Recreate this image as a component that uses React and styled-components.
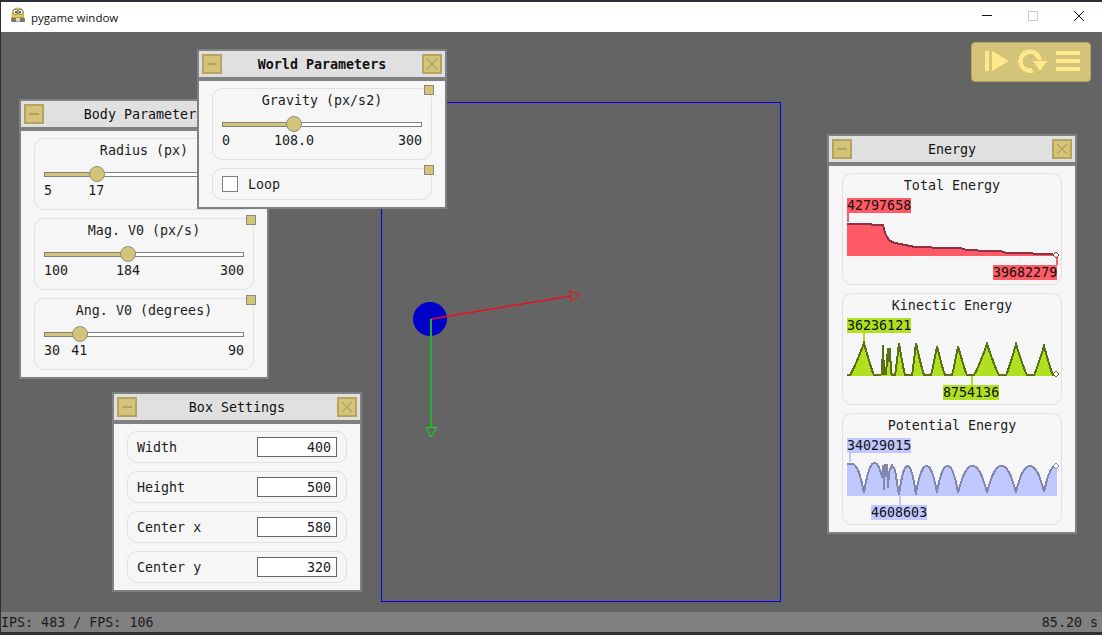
import React from 'react';
import styled, { createGlobalStyle } from 'styled-components';

const GlobalStyle = createGlobalStyle`
    html, body {
        margin: 0;
        padding: 0;
        overflow: hidden;
        background: #2b2f36;
    }
    * {
        box-sizing: border-box;
    }
`;

const MONO = `'DejaVu Sans Mono', 'Liberation Mono', monospace`;
const GOLD = '#d4c479';
const GOLD_DARK = '#b5a35f';

const Frame = styled.div`
    width: 1102px;
    height: 635px;
    padding: 2px 0 3px 1px;
    display: flex;
    flex-direction: column;
    background: #2b2f36;
`;

const TitleBar = styled.div`
    height: 30px;
    flex: none;
    display: flex;
    align-items: center;
    padding-left: 9px;
    background: #fff;
    font-family: 'Open Sans', 'Noto Sans', sans-serif;
    font-size: 11.5px;
    color: #111;
`;

const TitleText = styled.span`
    margin-left: 5px;
    flex: 1;
`;

const Caption = styled.div`
    display: flex;
    align-items: center;
    width: 46px;
    height: 30px;
    margin-top: -2px;
    justify-content: center;
    color: #111;
`;

const Canvas = styled.div`
    position: relative;
    flex: 1;
    background: #646464;
    overflow: hidden;
`;

const Scene = styled.svg`
    position: absolute;
    left: 0;
    top: 0;
`;

const StatusBar = styled.div`
    height: 20px;
    flex: none;
    display: flex;
    justify-content: space-between;
    align-items: center;
    padding: 0 4px 0 0;
    background: #808080;
    font-family: ${MONO};
    font-size: 13.33px;
    color: #1c1c1c;
`;

const Toolbar = styled.div`
    position: absolute;
    left: 970px;
    top: 10px;
    width: 120px;
    height: 40px;
    display: flex;
    gap: 9px;
    padding: 8px 0 0 13px;
    background: ${GOLD};
    border: 1px solid ${GOLD_DARK};
    border-radius: 4px;
    svg {
        display: block;
        fill: #ffe88a;
    }
`;

const Win = styled.div`
    position: absolute;
    left: ${(p) => p.$x - 1}px;
    top: ${(p) => p.$y - 32}px;
    width: 250px;
    border: 2px solid #808080;
    background: #f6f6f6;
`;

const WinHead = styled.div`
    height: 30px;
    display: flex;
    align-items: flex-start;
    padding: 3px 3px 0;
    background: #e0e0e0;
    border-bottom: 4px solid #808080;
`;

const WinTitle = styled.div`
    flex: 1;
    text-align: center;
    font-family: ${MONO};
    font-size: 13.33px;
    font-weight: ${(p) => (p.$active ? 700 : 400)};
    line-height: 22px;
    color: #111;
`;

const HeadButton = styled.div`
    width: 20px;
    height: 20px;
    flex: none;
    display: flex;
    align-items: center;
    justify-content: center;
    background: ${GOLD};
    border: 2px solid ${GOLD_DARK};
    svg {
        display: block;
    }
`;

const WinBody = styled.div`
    display: flex;
    flex-direction: column;
    gap: 8px;
    padding: 7px 13px;
`;

const Group = styled.div`
    position: relative;
    background: #f6f6f6;
    border: 1px solid #e0e0e0;
    border-radius: 10px;
    font-family: ${MONO};
    font-size: 13.33px;
    color: #1c1c1c;
`;

const Corner = styled.div`
    position: absolute;
    top: -4px;
    right: -3px;
    width: 10px;
    height: 10px;
    background: ${GOLD};
    border: 1px solid #8a8a7a;
`;

const SliderGroup = styled(Group)`
    height: 72px;
    padding: 4px 9px 0;
`;

const GroupTitle = styled.div`
    height: 16px;
    line-height: 16px;
    text-align: center;
`;

const Track = styled.div`
    position: relative;
    height: 5px;
    margin-top: 13px;
    background: #fff;
    border: 1px solid #808080;
`;

const TrackFill = styled.div`
    height: 100%;
    background: ${GOLD};
`;

const Handle = styled.div`
    position: absolute;
    top: -7px;
    width: 16px;
    height: 16px;
    margin-left: -8px;
    background: ${GOLD};
    border: 1px solid #8f8f80;
    border-radius: 50%;
`;

const ValueRow = styled.div`
    position: relative;
    display: flex;
    justify-content: space-between;
    height: 16px;
    margin-top: 6px;
    line-height: 16px;
`;

const CurrentValue = styled.span`
    position: absolute;
    top: 0;
    transform: translateX(-50%);
`;

const FieldRow = styled(Group)`
    height: 32px;
    display: flex;
    align-items: center;
    justify-content: space-between;
    padding: 0 9px;
`;

const NumberInput = styled.input`
    width: 80px;
    height: 20px;
    padding: 0 5px 0 0;
    border: 1px solid #666;
    border-radius: 0;
    outline: none;
    background: #fff;
    text-align: right;
    font-family: ${MONO};
    font-size: 13.33px;
    color: #1c1c1c;
`;

const CheckRow = styled(Group)`
    height: 32px;
    display: flex;
    align-items: center;
    gap: 10px;
    padding: 0 9px;
`;

const CheckBox = styled.div`
    width: 16px;
    height: 16px;
    background: #fff;
    border: 1px solid #808080;
`;

const ChartGroup = styled(Group)`
    height: 112px;
    padding: 4px 4px 0;
`;

const Tag = styled.div`
    width: max-content;
    height: 15px;
    margin-left: ${(p) => p.$left}px;
    margin-top: ${(p) => p.$gap || 0}px;
    padding: 0;
    line-height: 15px;
    background: ${(p) => p.$color};
    color: #111;
`;

const Plot = styled.svg`
    display: block;
    overflow: visible;
`;

const range = (a, b) => {
    const out = [];
    for (let x = a; x <= b; x += 1) out.push(x);
    return out;
};

// a kinetic energy bump: sharp at the top, lying flat on the floor at both ends
const bump = (a, p, b, top, base) => range(a, b).map((x) => {
    const t = x < p ? (p - x) / (p - a - 3) : (x - p) / (b - p - 3);
    return [x, base - (base - top) * Math.pow(1 - Math.min(t, 1), 1.15)];
});

// a potential energy arc between two bounces
const arc = (a, b, top, low) => range(a, b).map((x) => {
    const c = (a + b) / 2;
    const t = Math.abs(x - c) / ((b - a) / 2);
    return [x, top + (low - top) * Math.pow(t, 2.2)];
});

const totalLine = [
    [847, 224], [871, 224], [872, 225], [883, 225], [884, 229], [885, 233], [887, 237],
    [889, 240], [892, 242], [895, 243], [905, 245], [915, 247], [921, 247.5], [925, 246.5],
    [935, 248], [960, 248], [965, 249.5], [975, 249.5], [980, 251], [1000, 251],
    [1005, 252.5], [1030, 252.5], [1035, 254], [1050, 254], [1056, 255],
];

const kineticLine = [
    ...bump(847, 864, 877, 343, 375),
    [880, 375], [882, 374], [883, 345], [884, 374], [886, 374], [888, 348], [889, 362],
    [890, 348], [891, 372],
    ...bump(892, 899, 908, 343, 375),
    ...bump(909, 916, 927, 343, 375),
    ...bump(928, 937, 948, 346, 375),
    ...bump(949, 958, 970, 346, 375),
    ...bump(971, 987, 1002, 344, 375),
    ...bump(1003, 1016, 1030, 344, 375),
    ...bump(1031, 1044, 1056, 346, 375),
];

const potentialLine = [
    [847, 464], [852, 464],
    ...arc(840, 864, 464, 493).filter(([x]) => x > 852),
    ...arc(864, 885, 463, 493).slice(0, 19),
    [883, 465], [884, 490], [885, 465], [887, 465], [888, 488], [889, 472], [892, 465],
    [895, 470],
    ...arc(899, 916, 466, 495),
    ...arc(916, 937, 466, 493),
    ...arc(937, 958, 466, 492),
    ...arc(958, 987, 466, 493),
    ...arc(987, 1016, 466, 493),
    ...arc(1016, 1044, 466, 492),
    ...arc(1044, 1068, 466, 492).filter(([x]) => x <= 1056),
];

const charts = [
    {
        title: 'Total Energy',
        top: 213,
        base: 256,
        fill: '#ff5a66',
        line: '#8c3244',
        points: totalLine,
        high: { text: '42797658', left: 0, tick: 847 },
        low: { text: '39682279', left: 146, tick: 1056 },
        end: 255,
    },
    {
        title: 'Kinectic Energy',
        top: 333,
        base: 376,
        fill: '#b0e020',
        line: '#5a7014',
        points: kineticLine,
        high: { text: '36236121', left: 0, tick: 863 },
        low: { text: '8754136', left: 96, tick: 971 },
        end: 374,
    },
    {
        title: 'Potential Energy',
        top: 453,
        base: 496,
        fill: '#c0c8ff',
        line: '#8088b0',
        points: potentialLine,
        high: { text: '34029015', left: 0, tick: 849 },
        low: { text: '4608603', left: 24, tick: 899 },
        end: 466,
    },
];

const toPoints = (list) => list.map(([x, y]) => `${x},${y.toFixed(1)}`).join(' ');

const Chart = ({ chart }) => {
    const { top, base, fill, line, points, high, low, end } = chart;
    const area = [[847, base], ...points, [1057, points[points.length - 1][1]], [1057, base]];
    return (
        <ChartGroup>
            <GroupTitle>{chart.title}</GroupTitle>
            <Tag $left={0} $gap={4} $color={fill}>{high.text}</Tag>
            <Plot width="210" height="52" viewBox={`847 ${top} 210 52`}>
                <g shapeRendering="crispEdges">
                    <rect x={high.tick} y={top} width="2" height="9" fill={fill} />
                    <rect x={low.tick} y={base} width="2" height="9" fill={fill} />
                    <polygon points={toPoints(area)} fill={fill} />
                    <polyline points={toPoints(points)} fill="none" stroke={line} strokeWidth="2" />
                </g>
                <polygon
                    points={`1056,${end - 3} 1059,${end} 1056,${end + 3} 1053,${end}`}
                    fill="#fff"
                    stroke={line}
                    strokeWidth="1"
                />
            </Plot>
            <Tag $left={low.left} $color={fill}>{low.text}</Tag>
        </ChartGroup>
    );
};

const Slider = ({ title, min, max, value, label }) => {
    const pct = ((value - min) / (max - min)) * 100;
    return (
        <SliderGroup>
            <Corner />
            <GroupTitle>{title}</GroupTitle>
            <Track>
                <TrackFill style={{ width: `${pct}%` }} />
                <Handle style={{ left: `${pct}%` }} />
            </Track>
            <ValueRow>
                <span>{min}</span>
                <CurrentValue style={{ left: `${pct}%` }}>{label || value}</CurrentValue>
                <span>{max}</span>
            </ValueRow>
        </SliderGroup>
    );
};

const MinusIcon = () => (
    <svg width="16" height="16" viewBox="0 0 16 16">
        <rect x="3" y="7" width="10" height="2" fill={GOLD_DARK} />
    </svg>
);

const CloseIcon = () => (
    <svg width="16" height="16" viewBox="0 0 16 16">
        <path d="M3 3 L13 13 M13 3 L3 13" stroke={GOLD_DARK} strokeWidth="1.2" fill="none" />
    </svg>
);

const Window = ({ x, y, title, active, children }) => (
    <Win $x={x} $y={y}>
        <WinHead>
            <HeadButton><MinusIcon /></HeadButton>
            <WinTitle $active={active}>{title}</WinTitle>
            <HeadButton><CloseIcon /></HeadButton>
        </WinHead>
        <WinBody>{children}</WinBody>
    </Win>
);

const PygameIcon = () => (
    <svg width="16" height="18" viewBox="0 1 16 18" style={{ marginTop: -2 }}>
        <path d="M3 15 C1 12 2 7 3 5 C4 1 12 1 13 5 C14 8 14 12 12 14 Z" fill="#f2cf3a" stroke="#a58a1e" strokeWidth=".6" />
        <circle cx="5.5" cy="6" r="2.6" fill="#fff" stroke="#5a5a4a" strokeWidth=".8" />
        <circle cx="10.5" cy="6" r="2.6" fill="#fff" stroke="#5a5a4a" strokeWidth=".8" />
        <circle cx="6" cy="6.2" r="1" fill="#222" />
        <circle cx="10" cy="6.2" r="1" fill="#222" />
        <rect x="1" y="11.5" width="14" height="4.5" rx="1.5" fill="#77776a" />
        <rect x="6" y="12" width="4" height="3.5" fill="#d9d6c8" />
    </svg>
);

const Scenery = () => (
    <Scene width="1101" height="580" viewBox="1 32 1101 580">
        <rect x="381.5" y="102.5" width="399" height="499" fill="none" stroke="#0000f0" strokeWidth="1" />
        <circle cx="430" cy="319" r="17" fill="#0000c8" />
        <line x1="431" y1="319" x2="571" y2="296" stroke="#e8101c" strokeWidth="1.5" />
        <polygon points="569.5,291 571,301.5 580,294.5" fill="none" stroke="#f01010" strokeWidth="1" />
        <line x1="431" y1="319" x2="431" y2="427" stroke="#20b030" strokeWidth="2" />
        <polygon points="426,427.5 436.5,427.5 431,437" fill="none" stroke="#10e020" strokeWidth="1" />
    </Scene>
);

const App = () => (
    <Frame>
        <GlobalStyle />
        <TitleBar>
            <PygameIcon />
            <TitleText>pygame window</TitleText>
            <Caption>
                <svg width="12" height="12" viewBox="0 0 12 12"><rect x="1" y="5" width="10" height="1" fill="#111" /></svg>
            </Caption>
            <Caption>
                <svg width="12" height="12" viewBox="0 0 12 12"><rect x="1.5" y="1.5" width="9" height="9" fill="none" stroke="#ccc" /></svg>
            </Caption>
            <Caption>
                <svg width="12" height="12" viewBox="0 0 12 12"><path d="M1 1 L11 11 M11 1 L1 11" stroke="#111" strokeWidth="1" /></svg>
            </Caption>
        </TitleBar>
        <Canvas>
            <Scenery />
            <Toolbar>
                <svg width="24" height="20" viewBox="0 0 24 20" shapeRendering="crispEdges">
                    <rect x="0" y="0" width="4" height="20" />
                    <polygon points="7,0 24,10 7,20" />
                </svg>
                <svg width="29" height="24" viewBox="0 0 29 24" shapeRendering="crispEdges" style={{ marginTop: -2 }}>
                    <path d="M21.5 11 A9.5 9.5 0 1 0 14.5 21.4" fill="none" stroke="#ffe88a" strokeWidth="4.5" />
                    <polygon points="15,12 29,12 22,22" />
                </svg>
                <svg width="24" height="20" viewBox="0 0 24 20" shapeRendering="crispEdges">
                    <rect y="0" width="24" height="4" />
                    <rect y="8" width="24" height="4" />
                    <rect y="16" width="24" height="4" />
                </svg>
            </Toolbar>
            <Window x={19} y={99} title="Body Parameters">
                <Slider title="Radius (px)" min={5} max={51} value={17} />
                <Slider title="Mag. V0 (px/s)" min={100} max={300} value={184} />
                <Slider title="Ang. V0 (degrees)" min={30} max={90} value={40.6} label="41" />
            </Window>
            <Window x={197} y={49} title="World Parameters" active>
                <Slider title="Gravity (px/s2)" min={0} max={300} value={108} label="108.0" />
                <CheckRow>
                    <Corner />
                    <CheckBox />
                    <span>Loop</span>
                </CheckRow>
            </Window>
            <Window x={112} y={392} title="Box Settings">
                {[['Width', 400], ['Height', 500], ['Center x', 580], ['Center y', 320]].map(([name, value]) => (
                    <FieldRow key={name}>
                        <span>{name}</span>
                        <NumberInput readOnly value={value} />
                    </FieldRow>
                ))}
            </Window>
            <Window x={827} y={134} title="Energy">
                {charts.map((chart) => <Chart key={chart.title} chart={chart} />)}
            </Window>
        </Canvas>
        <StatusBar>
            <span>IPS: 483 / FPS: 106</span>
            <span>85.20 s</span>
        </StatusBar>
    </Frame>
);

export default App;
